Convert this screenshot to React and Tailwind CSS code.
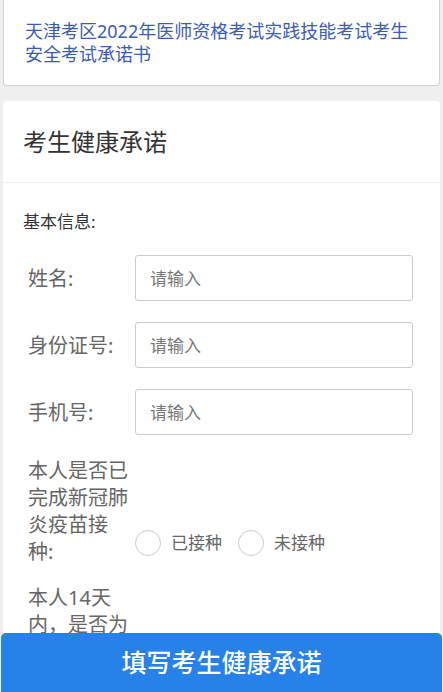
import React, { useState } from "react";

const font = { fontFamily: '"Noto Sans", "Noto Sans CJK SC", sans-serif' };

const InputRow = ({ label }) => (
  <div className="flex items-center">
    <div className="w-[107px] shrink-0 text-[20px] leading-[27px] text-[#666]">{label}</div>
    <input
      placeholder="请输入"
      className="h-[46px] w-[278px] rounded-[3px] border border-[#ccc] bg-white px-[14px] text-[17px] text-[#333] placeholder:text-[#777] outline-none"
    />
  </div>
);

const Radio = ({ text, checked, onClick }) => (
  <button onClick={onClick} className="flex items-center gap-[10px]">
    <span className="flex h-[26px] w-[26px] items-center justify-center rounded-full border border-[#ccc] bg-white">
      {checked && <span className="h-[12px] w-[12px] rounded-full bg-[#2681e8]" />}
    </span>
    <span className="text-[17px] text-[#666]">{text}</span>
  </button>
);

export default function App() {
  const [vaccine, setVaccine] = useState(null);

  return (
    <div className="min-h-screen bg-[#efefef] pb-[80px]" style={font}>
      {/* title card */}
      <div className="mx-[3px] rounded-b-[4px] border border-t-0 border-[#cbd5d9] bg-white px-[21px] pt-[20px] pb-[19px]">
        <p className="max-w-[390px] text-[18px] leading-[23px] text-[#3b5cb0]">
          天津考区2022年医师资格考试实践技能考试考生安全考试承诺书
        </p>
      </div>

      {/* form card */}
      <div className="mx-[3px] mt-[15px] rounded-t-[4px] bg-white">
        <div className="flex h-[82px] items-center border-b border-[#eee] px-[20px]">
          <h2 className="text-[24px] text-[#333]">考生健康承诺</h2>
        </div>

        <div className="pt-[27px] pl-[25px]">
          <div className="-ml-[5px] text-[17px] leading-[24px] text-[#333]">基本信息:</div>

          <div className="mt-[21px] flex flex-col gap-[21px]">
            <InputRow label="姓名:" />
            <InputRow label="身份证号:" />
            <InputRow label="手机号:" />
          </div>

          <div className="mt-[22px] flex items-end">
            <div className="w-[101px] shrink-0 text-[20px] leading-[27px] text-[#666]">
              本人是否已完成新冠肺炎疫苗接种:
            </div>
            <div className="mb-[9px] ml-[6px] flex items-center gap-[16px]">
              <Radio text="已接种" checked={vaccine === 1} onClick={() => setVaccine(1)} />
              <Radio text="未接种" checked={vaccine === 2} onClick={() => setVaccine(2)} />
            </div>
          </div>

          <div className="mt-[19px] w-[101px] text-[20px] leading-[27px] text-[#666]">
            本人14天内，是否为中、高风险地区人员:
          </div>
        </div>
      </div>

      {/* bottom button */}
      <button className="fixed bottom-0 left-[1px] right-[1px] h-[59px] rounded-t-[5px] border-t border-[#1f9a6e] bg-[#2681e8] text-[25px] font-medium text-white">
        填写考生健康承诺
      </button>
    </div>
  );
}
